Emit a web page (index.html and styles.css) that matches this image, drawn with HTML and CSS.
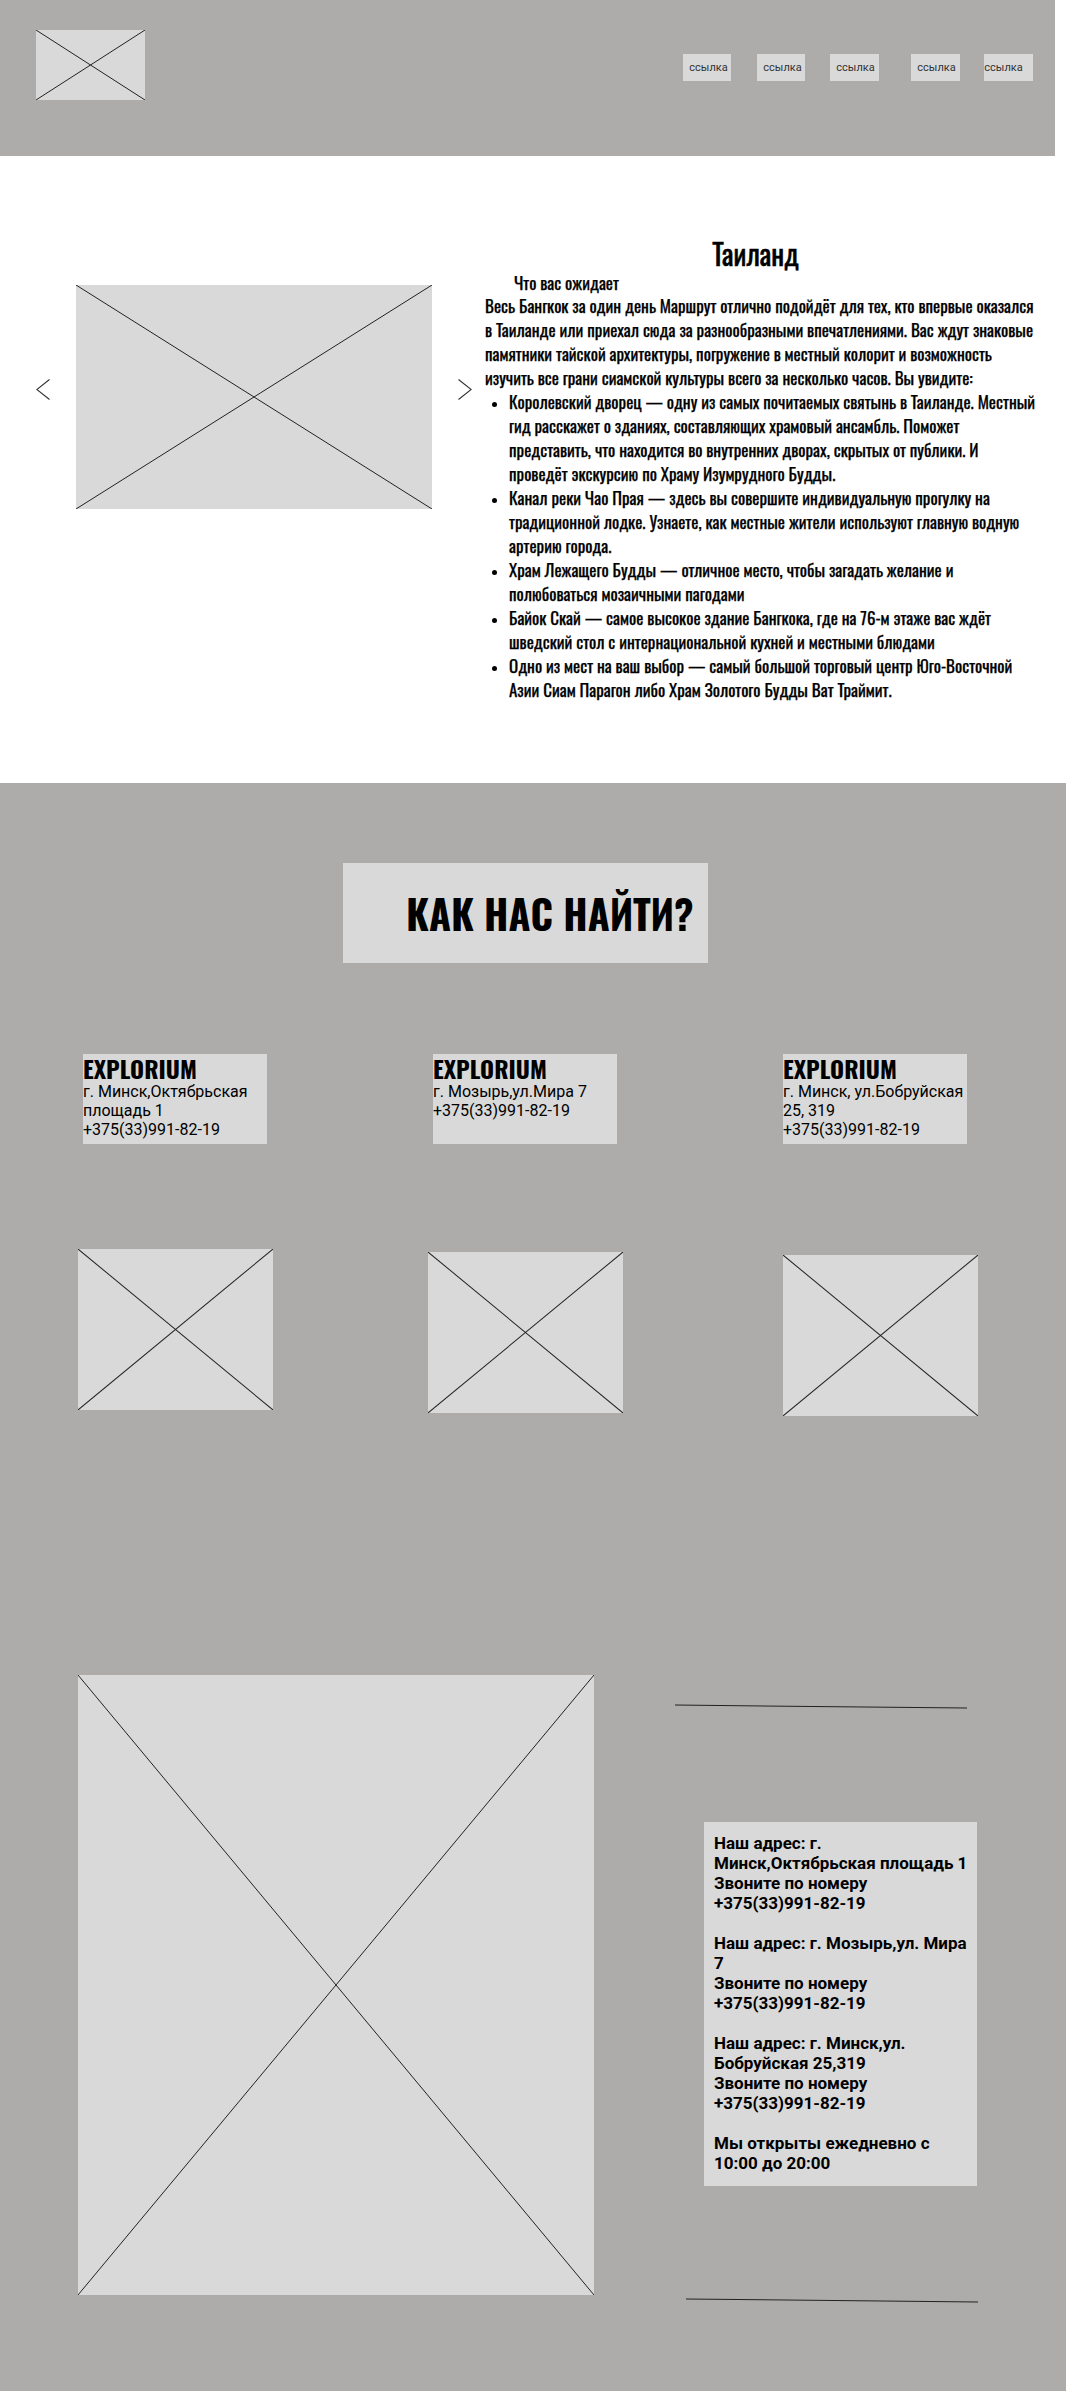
FILE: index.html
```html
<!DOCTYPE html>
<html lang="ru">
<head>
    <meta charset="UTF-8">
    <meta name="viewport" content="width=device-width, initial-scale=1.0">
    <title>Explorium</title>
    <link rel="stylesheet" href="styles.css">
</head>
<body>
    <header class="top">
        <div class="logo ph">
            <svg viewBox="0 0 100 100" preserveAspectRatio="none"><line x1="0" y1="0" x2="100" y2="100"/><line x1="0" y1="100" x2="100" y2="0"/></svg>
        </div>
        <nav class="menu">
            <a href="#">ссылка</a>
            <a href="#" class="next">ссылка</a>
            <a href="#" class="wide">ссылка</a>
            <a href="#" class="wide far">ссылка</a>
            <a href="#" class="wide last">ссылка</a>
        </nav>
    </header>

    <section class="tour">
        <div class="slider">
            <svg class="arrow" viewBox="0 0 14 21"><polyline points="13.5,0.5 0.8,10.5 13.5,20.5"/></svg>
            <div class="slide ph">
                <svg viewBox="0 0 100 100" preserveAspectRatio="none"><line x1="0" y1="0" x2="100" y2="100"/><line x1="0" y1="100" x2="100" y2="0"/></svg>
            </div>
            <svg class="arrow" viewBox="0 0 14 21"><polyline points="0.5,0.5 13.2,10.5 0.5,20.5"/></svg>
        </div>
        <div class="tour-text">
            <h2 class="tour-title">Таиланд</h2>
            <div class="tour-sub">Что вас ожидает</div>
            <p class="tour-desc">Весь Бангкок за один день Маршрут отлично подойдёт для тех, кто впервые оказался в Таиланде или приехал сюда за разнообразными впечатлениями. Вас ждут знаковые памятники тайской архитектуры, погружение в местный колорит и возможность изучить все грани сиамской культуры всего за несколько часов. Вы увидите:</p>
            <ul class="tour-list">
                <li>Королевский дворец — одну из самых почитаемых святынь в Таиланде. Местный гид расскажет о зданиях, составляющих храмовый ансамбль. Поможет представить, что находится во внутренних дворах, скрытых от публики. И проведёт экскурсию по Храму Изумрудного Будды.</li>
                <li>Канал реки Чао Прая — здесь вы совершите индивидуальную прогулку на традиционной лодке. Узнаете, как местные жители используют главную водную артерию города.</li>
                <li>Храм Лежащего Будды — отличное место, чтобы загадать желание и полюбоваться мозаичными пагодами</li>
                <li>Байок Скай — самое высокое здание Бангкока, где на 76-м этаже вас ждёт шведский стол с интернациональной кухней и местными блюдами</li>
                <li>Одно из мест на ваш выбор — самый большой торговый центр Юго-Восточной Азии Сиам Парагон либо Храм Золотого Будды Ват Траймит.</li>
            </ul>
        </div>
    </section>

    <section class="find">
        <div class="find-title">КАК НАС НАЙТИ?</div>

        <div class="offices">
            <div class="office">
                <div class="office-name">EXPLORIUM</div>
                <div class="office-addr">г. Минск,Октябрьская площадь 1<br>+375(33)991-82-19</div>
            </div>
            <div class="office">
                <div class="office-name">EXPLORIUM</div>
                <div class="office-addr">г. Мозырь,ул.Мира 7<br>+375(33)991-82-19</div>
            </div>
            <div class="office">
                <div class="office-name">EXPLORIUM</div>
                <div class="office-addr">г. Минск, ул.Бобруйская 25, 319<br>+375(33)991-82-19</div>
            </div>
        </div>

        <div class="photos">
            <div class="photo ph"><svg viewBox="0 0 100 100" preserveAspectRatio="none"><line x1="0" y1="0" x2="100" y2="100"/><line x1="0" y1="100" x2="100" y2="0"/></svg></div>
            <div class="photo ph second"><svg viewBox="0 0 100 100" preserveAspectRatio="none"><line x1="0" y1="0" x2="100" y2="100"/><line x1="0" y1="100" x2="100" y2="0"/></svg></div>
            <div class="photo ph third"><svg viewBox="0 0 100 100" preserveAspectRatio="none"><line x1="0" y1="0" x2="100" y2="100"/><line x1="0" y1="100" x2="100" y2="0"/></svg></div>
        </div>

        <div class="bottom">
            <div class="map ph">
                <svg viewBox="0 0 100 100" preserveAspectRatio="none"><line x1="0" y1="0" x2="100" y2="100"/><line x1="0" y1="100" x2="100" y2="0"/></svg>
            </div>
            <div class="contacts">
                <div class="rule"></div>
                <div class="contact-box">
                    Наш адрес: г. Минск,Октябрьская площадь 1<br>
                    Звоните по номеру<br>
                    +375(33)991-82-19<br>
                    <br>
                    Наш адрес: г. Мозырь,ул. Мира 7<br>
                    Звоните по номеру<br>
                    +375(33)991-82-19<br>
                    <br>
                    Наш адрес: г. Минск,ул. Бобруйская 25,319<br>
                    Звоните по номеру<br>
                    +375(33)991-82-19<br>
                    <br>
                    Мы открыты ежедневно с 10:00 до 20:00
                </div>
                <div class="rule rule-low"></div>
            </div>
        </div>
    </section>
</body>
</html>
```

FILE: styles.css
```css
body {
    margin: 0;
    background-color: #fff;
    color: #000;
    font-family: Roboto, "Noto Sans", sans-serif;
}

/* image placeholders */
.ph {
    background-color: #d9d9d9;
    flex-shrink: 0;
}
.ph svg {
    display: block;
    width: 100%;
    height: 100%;
}
.ph line {
    stroke: #222;
    stroke-width: 1;
    vector-effect: non-scaling-stroke;
}

/* header */
.top {
    width: 99%;
    height: 156px;
    box-sizing: border-box;
    background-color: #adacaa;
    display: flex;
    align-items: flex-start;
    padding: 30px 22px 0 36px;
}
.logo {
    width: 109px;
    height: 70px;
}
.menu {
    margin-left: auto;
    margin-top: 24px;
    display: flex;
    gap: 25px;
}
.menu a {
    width: 48px;
    height: 27px;
    box-sizing: border-box;
    padding-left: 6px;
    background-color: #d9d9d9;
    color: #333;
    font-size: 11px;
    line-height: 27px;
    text-decoration: none;
}
.menu a.next {
    margin-left: 1px;
}
.menu a.wide {
    width: 49px;
}
.menu a.far {
    margin-left: 7px;
}
.menu a.last {
    margin-left: -1px;
    padding-left: 0;
}

/* tour */
.tour {
    height: 627px;
    box-sizing: border-box;
    display: flex;
    align-items: flex-start;
    padding: 80px 25px 0 36px;
}
.slider {
    display: flex;
    align-items: center;
    gap: 26px;
    margin-top: 49px;
}
.arrow {
    width: 14px;
    height: 21px;
    margin-bottom: 16px;
}
.arrow polyline {
    fill: none;
    stroke: #333;
    stroke-width: 1.1;
}
.slide {
    width: 356px;
    height: 224px;
}
.tour-text {
    margin-left: 13px;
    width: 557px;
    font-family: "Oswald", "Liberation Sans Narrow", "DejaVu Sans Condensed", sans-serif;
    font-stretch: condensed;
    font-size: 17px;
    line-height: 24px;
    -webkit-text-stroke: 0.25px #000;
}
.tour-title {
    margin: 0;
    padding-right: 15px;
    text-align: center;
    font-size: 28px;
    line-height: 36px;
    font-weight: normal;
    -webkit-text-stroke: 0.5px #000;
}
.tour-sub {
    padding-left: 29px;
    line-height: 22px;
}
.tour-desc {
    margin: 0;
}
.tour-list {
    margin: 0;
    padding: 0 3px 0 24px;
}
.tour-list li::marker {
    font-size: 13px;
}

/* find us */
.find {
    background-color: #adacaa;
    padding: 80px 0 90px;
}
.find-title {
    width: 365px;
    height: 100px;
    box-sizing: border-box;
    margin-left: 343px;
    padding-left: 63px;
    display: flex;
    align-items: center;
    background-color: #d9d9d9;
    font-family: "Oswald", "Liberation Sans Narrow", "DejaVu Sans Condensed", sans-serif;
    font-stretch: condensed;
    font-weight: bold;
    font-size: 40px;
    white-space: nowrap;
}
.offices {
    display: flex;
    gap: 166px;
    margin: 91px 0 0 83px;
}
.office {
    width: 184px;
    height: 90px;
    background-color: #d9d9d9;
}
.office-name {
    font-family: "Oswald", "Liberation Sans Narrow", "DejaVu Sans Condensed", sans-serif;
    font-stretch: condensed;
    font-weight: bold;
    font-size: 24px;
    line-height: 28px;
}
.office-addr {
    font-size: 16px;
    line-height: 19px;
}
.photos {
    display: flex;
    align-items: flex-start;
    margin: 105px 0 0 78px;
}
.photo {
    width: 195px;
    height: 161px;
}
.photo.second {
    margin: 3px 0 0 155px;
}
.photo.third {
    margin: 6px 0 0 160px;
}
.bottom {
    display: flex;
    margin: 259px 0 0 78px;
}
.map {
    width: 516px;
    height: 620px;
}
.contacts {
    margin-left: 81px;
    padding-top: 31px;
}
.rule {
    width: 292px;
    border-top: 1px solid #222;
    transform: rotate(0.6deg);
}
.rule-low {
    margin: 114px 0 0 11px;
}
.contact-box {
    width: 273px;
    height: 364px;
    box-sizing: border-box;
    margin: 115px 0 0 29px;
    padding: 11px 8px 0 10px;
    background-color: #d9d9d9;
    font-size: 17px;
    font-weight: bold;
    line-height: 20px;
}
```
